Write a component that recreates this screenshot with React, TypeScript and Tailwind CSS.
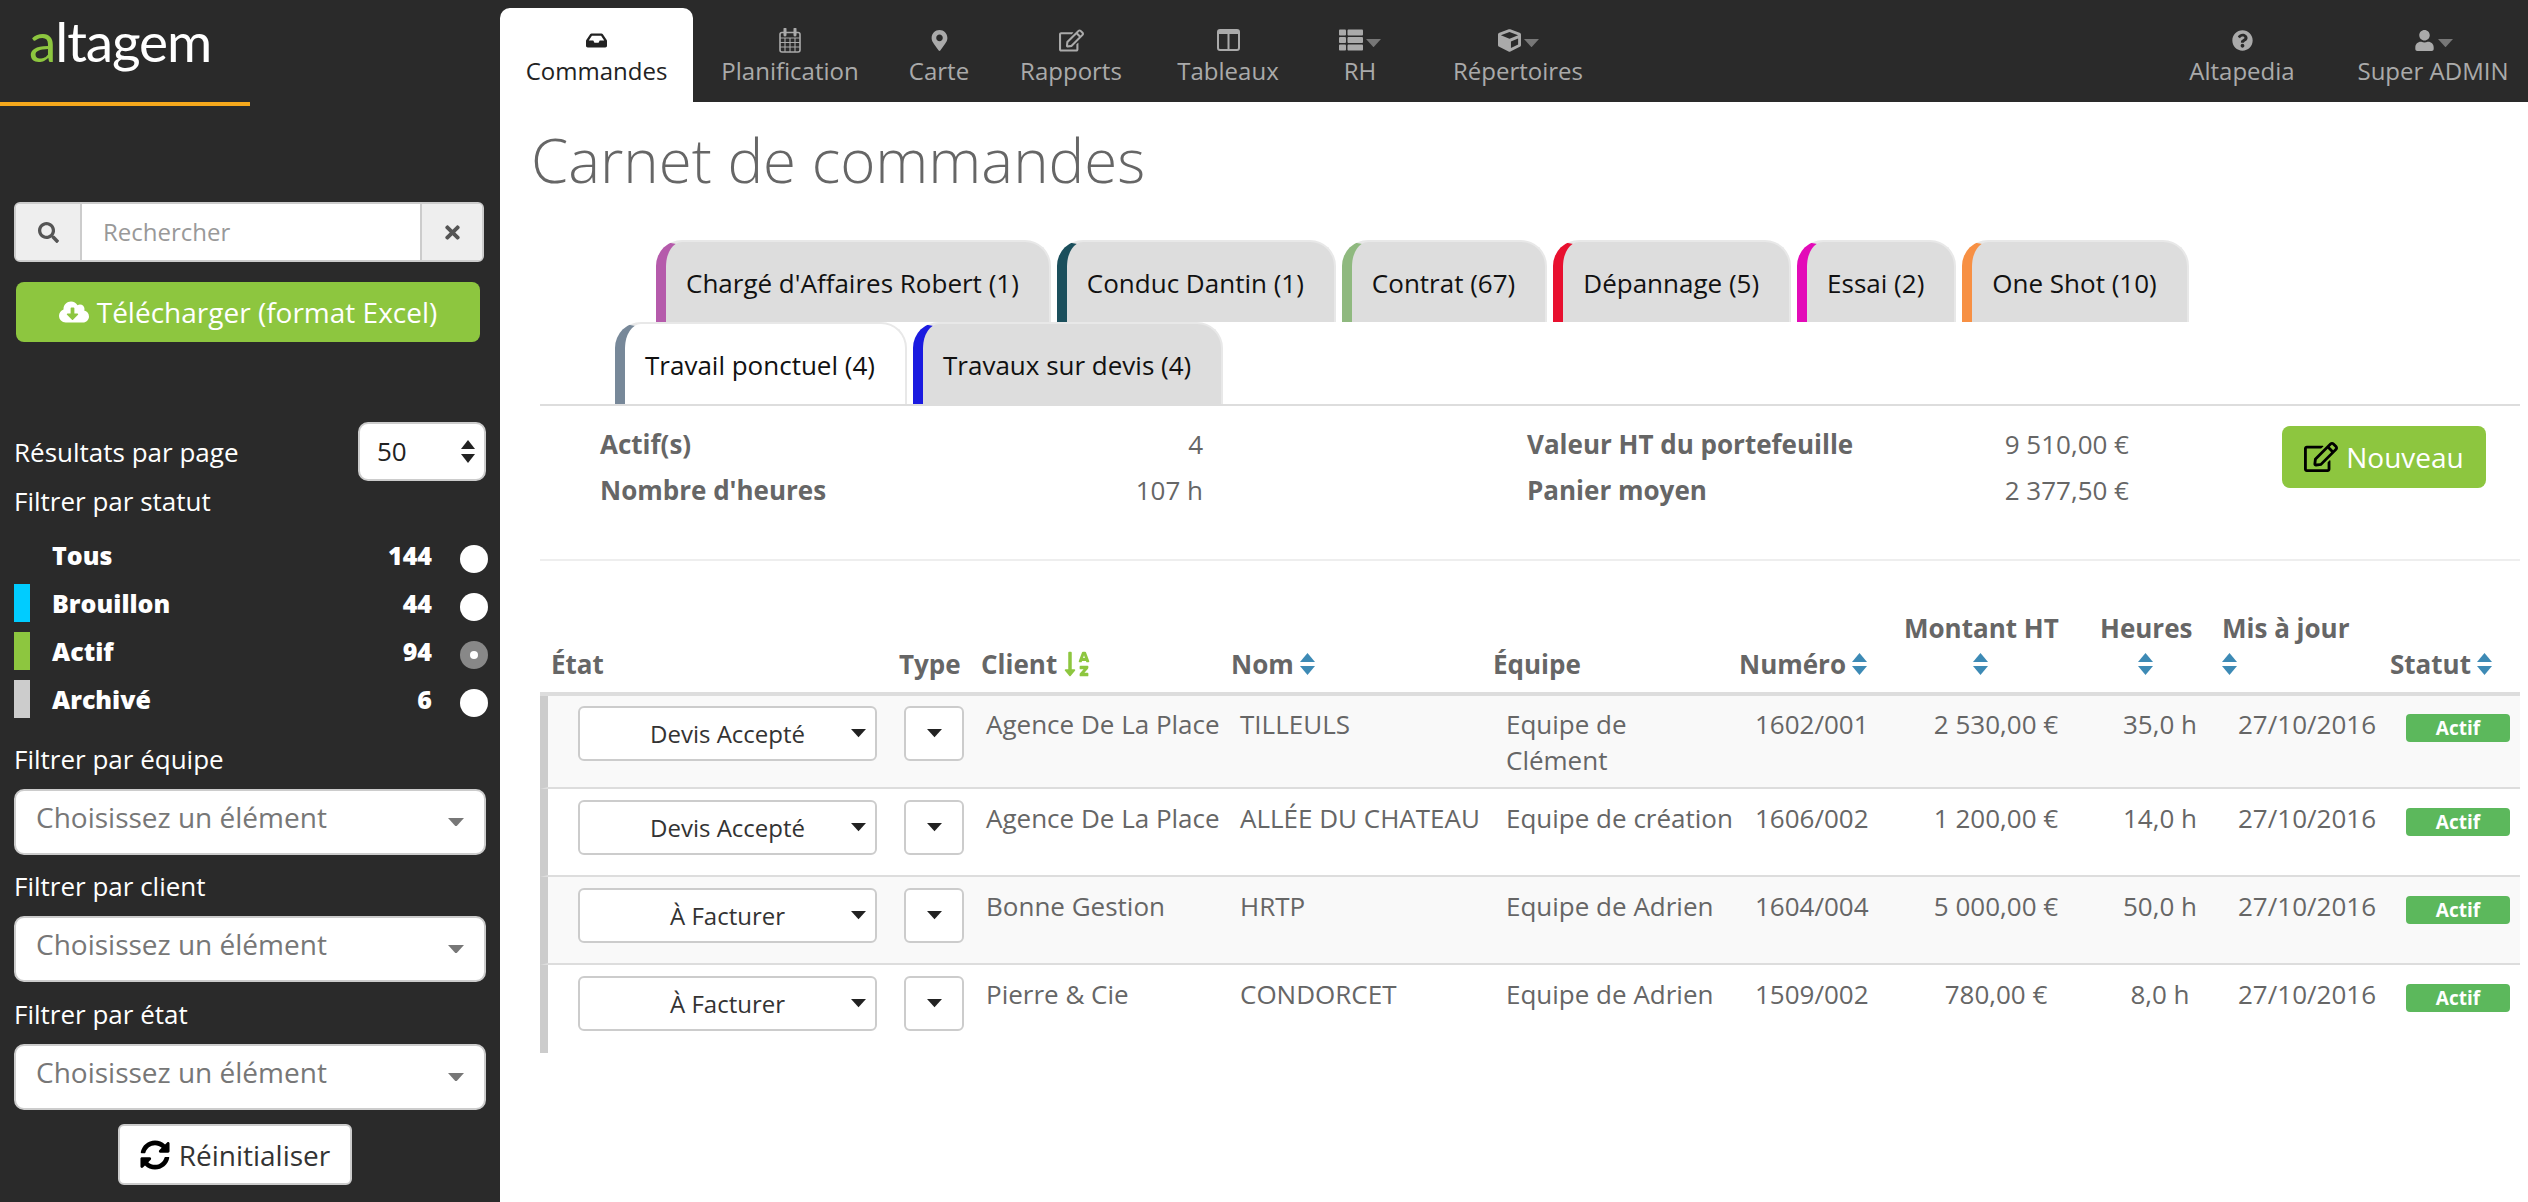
import type { ReactNode } from "react";
import {
  FaInbox,
  FaMapMarkerAlt,
  FaRegEdit,
  FaThList,
  FaCube,
  FaQuestionCircle,
  FaUser,
  FaSearch,
  FaTimes,
  FaCloudDownloadAlt,
  FaSyncAlt,
  FaSortAlphaDown,
} from "react-icons/fa";

const CalendarIcon = () => (
  <svg width="22" height="25" viewBox="0 0 22 25" fill="none" stroke="currentColor">
    <rect x="1" y="4.5" width="20" height="19.5" rx="2" strokeWidth="1.6" />
    <path d="M1 10h20M1 14.5h20M1 19h20M6 10v14M11 10v14M16 10v14" strokeWidth="1.1" />
    <path d="M6 1v6M16 1v6" strokeWidth="3" strokeLinecap="round" />
  </svg>
);

const ColumnsIcon = () => (
  <svg width="23" height="22" viewBox="0 0 23 22" fill="none" stroke="currentColor">
    <rect x="1" y="1" width="21" height="20" rx="2" strokeWidth="2" />
    <path d="M1 3h21" strokeWidth="4" />
    <path d="M11.5 3v18" strokeWidth="2" />
  </svg>
);

const Caret = ({ w = 15, color = "#222" }: { w?: number; color?: string }) => (
  <svg width={w} height={w * 0.55} viewBox="0 0 20 11">
    <polygon points="0,0 20,0 10,11" fill={color} />
  </svg>
);

const SortIcon = () => (
  <svg width="15" height="22" viewBox="0 0 15 22" className="shrink-0">
    <polygon points="7.5,0 15,9 0,9" fill="#3d8ab5" />
    <polygon points="0,13 15,13 7.5,22" fill="#3d8ab5" />
  </svg>
);

const navItems: { label: string; icon: ReactNode; w: string; caret?: boolean }[] = [
  { label: "Planification", icon: <CalendarIcon />, w: "w-[194px]" },
  { label: "Carte", icon: <FaMapMarkerAlt size={21} />, w: "w-[104px]" },
  { label: "Rapports", icon: <FaRegEdit size={25} />, w: "w-[160px]" },
  { label: "Tableaux", icon: <ColumnsIcon />, w: "w-[154px]" },
  { label: "RH", icon: <FaThList size={24} />, w: "w-[110px]", caret: true },
  { label: "Répertoires", icon: <FaCube size={23} />, w: "w-[206px]", caret: true },
];

const NavItem = ({ label, icon, w, caret }: { label: string; icon: ReactNode; w: string; caret?: boolean }) => (
  <div className={`flex ${w} flex-col items-center pt-[19px] text-[#aaaaaa]`}>
    <div className="flex h-[26px] items-center gap-[3px]">
      {icon}
      {caret && (
        <span className="mt-[6px]">
          <Caret w={15} color="#777777" />
        </span>
      )}
    </div>
    <div className="whitespace-nowrap text-[24px] leading-[36px]">{label}</div>
  </div>
);

const FilterSelect = () => (
  <div className="flex h-[66px] items-center justify-between rounded-[10px] border-2 border-[#cccccc] bg-white pl-[20px] pr-[20px]">
    <span className="-mt-[10px] text-[28px] leading-[36px] text-[#777777]">Choisissez un élément</span>
    <Caret w={16} color="#777777" />
  </div>
);

const statuses = [
  { label: "Tous", count: 144, bar: "bg-transparent", checked: false },
  { label: "Brouillon", count: 44, bar: "bg-[#00ccff]", checked: false },
  { label: "Actif", count: 94, bar: "bg-[#8dc63f]", checked: true },
  { label: "Archivé", count: 6, bar: "bg-[#cccccc]", checked: false },
];

const Sidebar = () => (
  <aside className="flex w-[500px] shrink-0 flex-col bg-[#2a2a2a] text-white">
    <div className="flex h-[102px] items-start pl-[29px] pt-[8px]">
      <span className="font-['Lato',sans-serif] text-[55px] font-normal leading-[66px] tracking-[-0.02em] text-white">
        <span className="text-[#8dc63f]">a</span>ltagem
      </span>
    </div>
    <div className="h-[4px] w-[250px] bg-[#f5a81c]" />

    <div className="ml-[14px] mt-[96px] flex h-[60px] w-[470px] overflow-hidden rounded-[6px] border-2 border-[#cccccc] bg-white text-[24px]">
      <div className="flex w-[66px] items-center justify-center border-r-2 border-[#cccccc] bg-[#eeeeee] text-[#555555]">
        <FaSearch size={21} />
      </div>
      <div className="flex flex-1 items-center pl-[21px] text-[#999999]">Rechercher</div>
      <div className="flex w-[62px] items-center justify-center border-l-2 border-[#cccccc] bg-[#eeeeee] text-[#555555]">
        <FaTimes size={21} />
      </div>
    </div>
    <div className="mx-[16px] mt-[20px] flex h-[60px] w-[464px] items-center justify-center gap-[8px] rounded-[8px] bg-[#8dc63f] text-[28px] font-medium">
      <FaCloudDownloadAlt size={30} />
      <span>Télécharger (format Excel)</span>
    </div>

    <div className="mt-[80px] flex h-[59px] items-center justify-between pl-[14px] pr-[14px]">
      <span className="mt-[2px] text-[26px]">Résultats par page</span>
      <div className="flex h-[59px] w-[128px] items-center justify-between rounded-[10px] border-2 border-[#cccccc] bg-white pl-[17px] pr-[9px] text-[26px] text-[#222222]">
        <span>50</span>
        <svg width="14" height="24" viewBox="0 0 14 24">
          <polygon points="7,0 14,9 0,9" fill="#222222" />
          <polygon points="0,14 14,14 7,23" fill="#222222" />
        </svg>
      </div>
    </div>
    <div className="mt-[2px] pl-[14px] text-[26px] leading-[36px]">Filtrer par statut</div>

    <div className="mt-[12px]">
      {statuses.map((s) => (
        <div key={s.label} className="flex h-[48px] items-center pl-[14px] pr-[12px]">
          <div className={`h-[38px] w-[16px] ${s.bar}`} />
          <div className="ml-[22px] mt-[1px] flex-1 text-[25px] font-extrabold">{s.label}</div>
          <div className="mt-[1px] text-[25px] font-extrabold">{s.count}</div>
          <div
            className={`ml-[28px] mt-[8px] flex h-[28px] w-[28px] items-center justify-center rounded-full ${
              s.checked ? "bg-[#888888]" : "bg-white"
            }`}
          >
            {s.checked && <div className="h-[8px] w-[8px] rounded-full bg-white" />}
          </div>
        </div>
      ))}
    </div>

    <div className="flex flex-col px-[14px] text-[26px]">
      <div className="mt-[18px] leading-[36px]">Filtrer par équipe</div>
      <div className="mt-[12px]"><FilterSelect /></div>
      <div className="mt-[13px] leading-[36px]">Filtrer par client</div>
      <div className="mt-[12px]"><FilterSelect /></div>
      <div className="mt-[14px] leading-[36px]">Filtrer par état</div>
      <div className="mt-[12px]"><FilterSelect /></div>
    </div>
    <div className="ml-[118px] mt-[14px] flex h-[61px] w-[234px] items-center justify-center gap-[9px] rounded-[6px] border-2 border-[#cccccc] bg-white text-[28px] text-[#333333]">
      <FaSyncAlt size={30} className="text-black" />
      <span>Réinitialiser</span>
    </div>
  </aside>
);

const Tab = ({ label, color, active }: { label: string; color: string; active?: boolean }) => (
  <div
    className={`flex h-[82px] items-center whitespace-nowrap rounded-t-[26px] border-2 border-b-0 border-[#e8e8e8] pl-[20px] pr-[30px] pt-[2px] text-[26px] text-[#111111] ${color} border-l-[10px] ${
      active ? "bg-white" : "bg-[#dddddd]"
    }`}
  >
    {label}
  </div>
);

const Stat = ({ label, value }: { label: string; value: string }) => (
  <div className="flex h-[46px] items-center justify-between text-[26px]">
    <span className="font-bold text-[#666666]">{label}</span>
    <span className="text-[#666666]">{value}</span>
  </div>
);

const TableSelect = ({ label }: { label?: string }) => (
  <div
    className={`grid h-[55px] grid-cols-[1fr_auto_1fr] items-center rounded-[6px] border-2 border-[#cccccc] bg-white text-[24px] text-[#333333] ${
      label ? "w-[299px]" : "w-[60px]"
    }`}
  >
    <span />
    {label ? <span className="whitespace-nowrap">{label}</span> : <Caret w={15} />}
    {label ? (
      <span className="justify-self-end pr-[9px]">
        <Caret w={15} />
      </span>
    ) : (
      <span />
    )}
  </div>
);

const rows = [
  { etat: "Devis Accepté", client: "Agence De La Place", nom: "TILLEULS", equipe: "Equipe de\nClément", num: "1602/001", montant: "2 530,00 €", heures: "35,0 h", h: "h-[93px]", pt: "pt-[10px]", bg: "bg-[#f9f9f9]" },
  { etat: "Devis Accepté", client: "Agence De La Place", nom: "ALLÉE DU CHATEAU", equipe: "Equipe de création", num: "1606/002", montant: "1 200,00 €", heures: "14,0 h", h: "h-[88px]", pt: "pt-[11px]", bg: "bg-white" },
  { etat: "À Facturer", client: "Bonne Gestion", nom: "HRTP", equipe: "Equipe de Adrien", num: "1604/004", montant: "5 000,00 €", heures: "50,0 h", h: "h-[88px]", pt: "pt-[11px]", bg: "bg-[#f9f9f9]" },
  { etat: "À Facturer", client: "Pierre & Cie", nom: "CONDORCET", equipe: "Equipe de Adrien", num: "1509/002", montant: "780,00 €", heures: "8,0 h", h: "h-[88px]", pt: "pt-[11px]", bg: "bg-white" },
];

const Th = ({ children }: { children: ReactNode }) => (
  <th className="border-b-4 border-[#dddddd] px-[11px] pb-[10px] text-left align-bottom text-[26px] font-bold leading-[36px] text-[#666666]">
    {children}
  </th>
);

const App = () => {
  return (
    <div className="flex h-[1202px] w-full overflow-hidden bg-white font-['Open_Sans',sans-serif]">
      <Sidebar />
      <div className="flex min-w-0 flex-1 flex-col">
        {/* top nav */}
        <nav className="flex h-[102px] shrink-0 bg-[#2a2a2a] pt-[8px]">
          <div className="flex w-[193px] flex-col items-center rounded-t-[10px] bg-white pt-[19px] text-[#222222]">
            <div className="flex h-[26px] items-center"><FaInbox size={21} /></div>
            <div className="text-[24px] leading-[36px]">Commandes</div>
          </div>
          {navItems.map((item) => (
            <NavItem key={item.label} {...item} />
          ))}
          <div className="ml-auto flex">
            <NavItem label="Altapedia" w="w-[192px]" icon={<FaQuestionCircle size={21} />} />
            <NavItem label="Super ADMIN" w="w-[190px]" icon={<FaUser size={21} />} caret />
          </div>
        </nav>

        <div className="flex-1">
          <h1 className="pl-[31px] pt-[22px] text-[60px] font-light leading-[72px] text-[#666666]">
            Carnet de commandes
          </h1>

          <div className="ml-[40px] mr-[8px] mt-[44px]">
            <div className="border-b-2 border-[#dddddd]">
              <div className="flex gap-[6px] pl-[116px]">
                <Tab label="Chargé d'Affaires Robert (1)" color="border-l-[#b55bab]" />
                <Tab label="Conduc Dantin (1)" color="border-l-[#1b4f5c]" />
                <Tab label="Contrat (67)" color="border-l-[#8fb97f]" />
                <Tab label="Dépannage (5)" color="border-l-[#e8102f]" />
                <Tab label="Essai (2)" color="border-l-[#e30bb8]" />
                <Tab label="One Shot (10)" color="border-l-[#f79044]" />
              </div>
              <div className="flex gap-[6px] pl-[75px]">
                <Tab label="Travail ponctuel (4)" color="border-l-[#778899]" active />
                <Tab label="Travaux sur devis (4)" color="border-l-[#1b1be0]" />
              </div>
            </div>

            {/* stats */}
            <div className="flex pl-[60px] pt-[15px]">
              <div className="w-[603px]">
                <Stat label="Actif(s)" value="4" />
                <Stat label="Nombre d'heures" value="107 h" />
              </div>
              <div className="ml-[324px] w-[602px]">
                <Stat label="Valeur HT du portefeuille" value="9 510,00 €" />
                <Stat label="Panier moyen" value="2 377,50 €" />
              </div>
              <div className="ml-[153px] mt-[5px] flex h-[62px] w-[204px] items-center justify-center gap-[8px] rounded-[8px] bg-[#8dc63f] text-[28px] font-medium text-white">
                <FaRegEdit size={34} className="text-black" />
                <span>Nouveau</span>
              </div>
            </div>

            <div className="mt-[46px] h-[2px] bg-[#eeeeee]" />

            <table className="mt-[49px] w-[1980px] table-fixed border-separate border-spacing-0 text-[26px] leading-[36px] text-[#666666]">
              <colgroup>
                <col className="w-[348px]" />
                <col className="w-[82px]" />
                <col className="w-[250px]" />
                <col className="w-[262px]" />
                <col className="w-[246px]" />
                <col className="w-[165px]" />
                <col className="w-[196px]" />
                <col className="w-[122px]" />
                <col className="w-[168px]" />
                <col className="w-[141px]" />
              </colgroup>
              <thead>
                <tr>
                  <Th>État</Th>
                  <Th>Type</Th>
                  <Th>
                    <span className="flex items-center gap-[6px]">
                      Client <FaSortAlphaDown size={28} className="text-[#8dc63f]" />
                    </span>
                  </Th>
                  <Th>
                    <span className="flex items-center gap-[6px]">Nom <SortIcon /></span>
                  </Th>
                  <Th>Équipe</Th>
                  <Th>
                    <span className="flex items-center gap-[6px]">Numéro <SortIcon /></span>
                  </Th>
                  <Th>
                    <span className="block whitespace-nowrap">Montant HT</span>
                    <span className="flex justify-center pb-[7px] pr-[22px] pt-[7px]"><SortIcon /></span>
                  </Th>
                  <Th>
                    <span className="block">Heures</span>
                    <span className="flex justify-center pb-[7px] pr-[10px] pt-[7px]"><SortIcon /></span>
                  </Th>
                  <Th>
                    <span className="block whitespace-nowrap">Mis à jour</span>
                    <span className="flex pb-[7px] pt-[7px]"><SortIcon /></span>
                  </Th>
                  <Th>
                    <span className="flex items-center gap-[6px]">Statut <SortIcon /></span>
                  </Th>
                </tr>
              </thead>
              <tbody>
                {rows.map((r, i) => {
                  const cell = `align-top ${r.h} ${r.pt} ${r.bg} ${i < rows.length - 1 ? "border-b-2 border-[#dddddd]" : ""}`;
                  return (
                    <tr key={r.num}>
                      <td className={`${cell} border-l-[8px] border-l-[#cccccc] pl-[30px]`}><TableSelect label={r.etat} /></td>
                      <td className={`${cell} pl-[16px]`}><TableSelect /></td>
                      <td className={`${cell} whitespace-nowrap pl-[16px]`}>{r.client}</td>
                      <td className={`${cell} whitespace-nowrap pl-[20px]`}>{r.nom}</td>
                      <td className={`${cell} whitespace-pre pl-[24px]`}>{r.equipe}</td>
                      <td className={`${cell} pl-[27px]`}>{r.num}</td>
                      <td className={`${cell} pl-[10px] text-center`}>{r.montant}</td>
                      <td className={`${cell} pl-[20px] text-center`}>{r.heures}</td>
                      <td className={`${cell} pl-[27px]`}>27/10/2016</td>
                      <td className={`${cell} pl-[27px]`}>
                        <div className="mt-[8px] flex h-[28px] w-[104px] items-center justify-center rounded-[4px] bg-[#5cb85c] text-[19px] font-bold text-white">
                          Actif
                        </div>
                      </td>
                    </tr>
                  );
                })}
              </tbody>
            </table>
          </div>
        </div>
      </div>
    </div>
  );
};

export default App;
